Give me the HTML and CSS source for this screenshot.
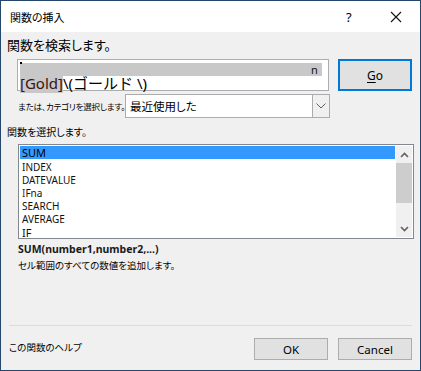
FILE: index.html
```html
<!DOCTYPE html>
<html lang="ja">
<head>
<meta charset="utf-8">
<link rel="stylesheet" href="styles.css">
</head>
<body>
<div class="dialog">
  <div class="titlebar">
    <span class="title">関数の挿入</span>
    <span class="help">?</span>
    <span class="close">
      <svg width="12" height="12" viewBox="0 0 12 12"><path d="M1 1L11 11M11 1L1 11" stroke="#111" stroke-width="1.1" fill="none"/></svg>
    </span>
  </div>
  <div class="body">
    <div class="heading">関数を検索します。</div>
    <div class="search-row">
      <div class="search-box">
        <div class="line1"><span class="dot"></span><span class="sel1"></span><span class="n">n</span></div>
        <div class="line2"><span class="sel2">[Gold]</span>\(ゴールド \)</div>
      </div>
      <button class="go"><u>G</u>o</button>
    </div>
    <div class="cat-row">
      <span class="cat-label">または、カテゴリを選択します。</span>
      <div class="select">
        <span class="select-text">最近使用した</span>
        <span class="select-arrow">
          <svg width="10" height="6" viewBox="0 0 10 6"><path d="M0.5 0.5L5 5L9.5 0.5" stroke="#606060" stroke-width="1" fill="none"/></svg>
        </span>
      </div>
    </div>
    <div class="sub-heading">関数を選択します。</div>
    <div class="listbox">
      <ul class="items">
        <li class="selected">SUM</li>
        <li>INDEX</li>
        <li>DATEVALUE</li>
        <li><span class="ibar">I</span>Fna</li>
        <li>SEARCH</li>
        <li>AVERAGE</li>
        <li class="big">IF</li>
      </ul>
      <div class="scrollbar">
        <span class="arr">
          <svg width="9" height="6" viewBox="0 0 9 6"><path d="M1 5L4.5 1.5L8 5" stroke="#606060" stroke-width="1.6" fill="none"/></svg>
        </span>
        <div class="track"><div class="thumb"></div></div>
        <span class="arr">
          <svg width="9" height="6" viewBox="0 0 9 6"><path d="M1 1L4.5 4.5L8 1" stroke="#606060" stroke-width="1.6" fill="none"/></svg>
        </span>
      </div>
    </div>
    <div class="syntax">SUM(number1,number2,...)</div>
    <div class="desc">セル範囲のすべての数値を追加します。</div>
    <div class="spacer"></div>
    <div class="separator"></div>
    <div class="footer">
      <span class="help-link">この関数のヘルプ</span>
      <button class="btn ok">OK</button>
      <button class="btn cancel">Cancel</button>
    </div>
  </div>
</div>
</body>
</html>
```
FILE: styles.css
```css
* { box-sizing: border-box; }
html, body { margin: 0; padding: 0; background: #f0f0f0; }
body {
  font-family: "Noto Sans", "Noto Sans CJK JP", sans-serif;
  color: #000;
}
.title, .heading, .cat-label, .select-text, .sub-heading, .desc, .help-link {
  font-family: "Noto Sans CJK JP", sans-serif;
  font-feature-settings: "palt";
}
.dialog {
  width: 421px;
  height: 371px;
  border: 1px solid #24476b;
  background: #f0f0f0;
  display: flex;
  flex-direction: column;
}
.titlebar {
  height: 31px;
  background: #fff;
  display: flex;
  align-items: center;
  flex-shrink: 0;
}
.title {
  font-size: 11px;
  margin-left: 9px;
  flex: 1;
}
.help {
  font-family: "Noto Sans", sans-serif;
  font-size: 13px;
  width: 12px;
  margin-right: 32px;
}
.close { width: 12px; height: 12px; margin-right: 18px; display: flex; }
.body {
  flex: 1;
  display: flex;
  flex-direction: column;
  padding: 4px 8px 10px 6px;
}
.heading {
  font-size: 13px;
  line-height: 18px;
  height: 18px;
}
.search-row {
  display: flex;
  margin-top: 5px;
  padding-left: 10px;
  gap: 9px;
}
.search-box {
  width: 312px;
  height: 32px;
  border: 1px solid #abadb3;
  background: #fff;
  padding: 2px 0 0 2px;
  position: relative;
}
.line1 {
  height: 14px;
  display: flex;
  align-items: flex-start;
  position: relative;
}
.dot { width: 2px; height: 2px; background: #000; position: absolute; left: 0; top: 0; }
.sel1 { width: 290px; height: 13px; background: #c8c8c8; margin-top: 1px; }
.n { background: #c8c8c8; font-size: 11px; line-height: 13px; height: 13px; margin-top: 1px; padding: 0 4px 0 1px; color: #111; }
.line2 {
  font-family: "Noto Sans", "Noto Sans CJK JP", sans-serif;
  font-size: 15px;
  line-height: 15px;
  height: 15px;
  white-space: nowrap;
  margin-top: 0;
}
.sel2 { background: #c8c8c8; color: #3a1010; }
.go {
  width: 74px;
  height: 32px;
  border: 2px solid #0078d7;
  background: #e1e1e1;
  font-family: "Noto Sans", sans-serif;
  font-size: 12px;
  padding: 0;
  color: #000;
}
.go u { text-decoration-thickness: 1px; text-underline-offset: 2px; }
.cat-row {
  display: flex;
  align-items: center;
  margin-top: 3px;
  padding-left: 11px;
}
.cat-label {
  font-size: 8.5px;
  width: 107px;
  white-space: nowrap;
  letter-spacing: -0.2px;
}
.select {
  width: 205px;
  height: 24px;
  border: 1px solid #acacac;
  background: #fff;
  display: flex;
  align-items: center;
}
.select-text {
  font-size: 11.5px;
  flex: 1;
  padding-left: 4px;
}
.select-arrow {
  width: 17px;
  height: 22px;
  background: #f0f0f0;
  border-left: 1px solid #acacac;
  display: flex;
  align-items: center;
  justify-content: center;
}
.sub-heading {
  font-size: 10px;
  line-height: 14px;
  margin-top: 7px;
  height: 14px;
}
.listbox {
  margin: 5px 0 0 11px;
  width: 396px;
  height: 95px;
  border: 1px solid #828790;
  background: #fff;
  display: flex;
  padding: 1px;
}
.items {
  list-style: none;
  margin: 0;
  padding: 0;
  flex: 1;
}
.items li {
  font-family: "Noto Sans", sans-serif;
  font-size: 10px;
  height: 13px;
  line-height: 13px;
  padding-left: 2px;
  color: #111;
}
.items li.selected {
  background: #3399ff;
  font-size: 11px;
  color: #000;
  height: 13px;
  margin-bottom: 2px;
}
.items li.big { font-size: 11px; }
.ibar { color: #5a1f2c; }
.scrollbar {
  width: 16px;
  background: #f0f0f0;
  display: flex;
  flex-direction: column;
  margin-left: 1px;
}
.arr { height: 17px; display: flex; align-items: center; justify-content: center; }
.track { flex: 1; }
.thumb { height: 40px; background: #cdcdcd; }
.syntax {
  font-family: "Noto Sans", sans-serif;
  font-weight: bold;
  font-size: 10.5px;
  line-height: 14px;
  margin: 3px 0 0 11px;
  color: #1a1a1a;
}
.desc {
  font-size: 9.5px;
  line-height: 14px;
  margin: 2px 0 0 11px;
}
.spacer { flex: 1; }
.separator {
  height: 1px;
  background: #dcdcdc;
  margin-left: 2px;
}
.footer {
  display: flex;
  align-items: center;
  margin-top: 12px;
  padding-left: 2px;
}
.help-link {
  font-size: 9.5px;
  flex: 1;
  margin-top: -4px;
}
.btn {
  width: 74px;
  height: 22px;
  border: 1px solid #adadad;
  background: #e1e1e1;
  font-family: "Noto Sans", sans-serif;
  font-size: 11.5px;
  padding: 0;
  color: #000;
}
.cancel { margin-left: 10px; }
```
